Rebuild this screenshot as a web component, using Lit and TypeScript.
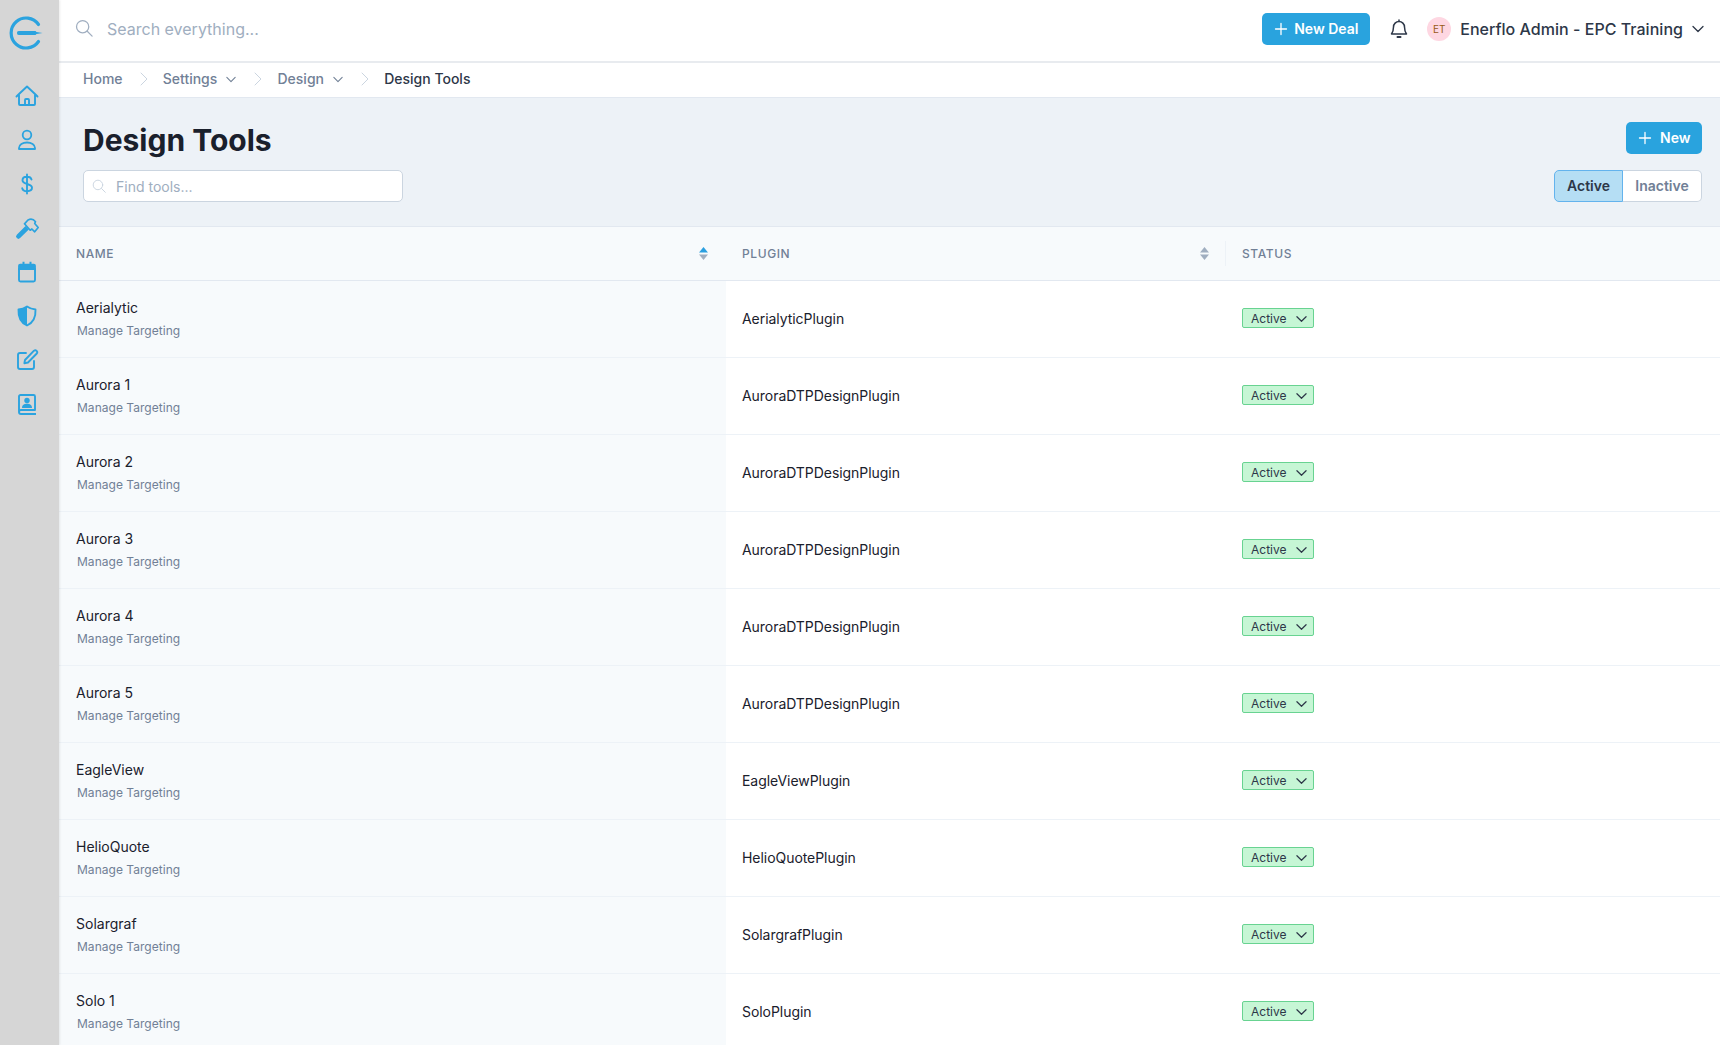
import { LitElement, html, css, svg } from "lit";
import { customElement, state } from "lit/decorators.js";

const chevronDown = html`<svg class="chev" viewBox="0 0 12 8" fill="none" stroke="currentColor" stroke-width="1.3" stroke-linecap="round" stroke-linejoin="round"><path d="M1 1.5l5 5 5-5" /></svg>`;
const plus = html`<svg class="plus" viewBox="0 0 14 14" fill="none" stroke="currentColor" stroke-width="1.3" stroke-linecap="round"><path d="M7 1.5v11M1.5 7h11" /></svg>`;
const sep = html`<svg class="sep" viewBox="0 0 8 14" fill="none" stroke="#cbd5e0" stroke-width="1" stroke-linecap="round" stroke-linejoin="round"><path d="M1 1l6 6-6 6" /></svg>`;
const search = html`<svg viewBox="0 0 20 20" fill="none" stroke="currentColor" stroke-width="1.4" stroke-linecap="round"><circle cx="8.5" cy="8.5" r="6.8" /><path d="M13.6 13.6l5.4 5.4" /></svg>`;

const navIcons = [
  svg`<path fill="none" stroke-width="1.9" stroke-linecap="round" stroke-linejoin="round" d="M1.500 12.500l2.500-2.500m0 0l8-7.500 8 7.500M4 10V20a1 1 0 001 1h4m11-11l2.500 2.500M20 10V20a1 1 0 01-1 1h-4m-6 0a1 1 0 001-1v-4a1 1 0 011-1h2a1 1 0 011 1v4a1 1 0 001 1m-6 0h6" />`,
  svg`<g fill="none" stroke-width="1.800" stroke-linejoin="round"><circle cx="12" cy="7" r="4.300" /><path d="M4 21v-1c0-3.300 3.600-5.500 8-5.500s8 2.200 8 5.500v1z" /></g>`,
  svg`<path fill="none" stroke-width="1.900" stroke-linecap="round" stroke-linejoin="round" d="M16.500 7.500C16 5.500 14.300 4.800 12 4.800c-2.800 0-4.500 1.300-4.500 3.400 0 4.800 9.500 2.800 9.500 7.600 0 2.100-2 3.400-5 3.400-2.500 0-4.300-1-4.800-3M12 2.500v19" />`,
  svg`<path stroke="none" d="M1.800 18.800l8.700-8.700 3.300 3.300-8.700 8.700a2.300 2.300 0 01-3.300-3.300z" /><path fill="none" stroke-width="1.700" stroke-linejoin="round" d="M9.500 7.800L13 4c2.700-1.300 5.500-.8 7.500 1.700l-.8 1.800 3.500 4-3.500 4.300-2.800-2.800-1.700 1.200-5.700-6.400z" />`,
  svg`<path fill="none" stroke-width="1.900" stroke-linejoin="round" d="M4 9h16V20a1.500 1.500 0 01-1.500 1.500H5.500A1.500 1.500 0 014 20z" /><path stroke="none" d="M3.100 10V5.800a2 2 0 012-2H7.500V1.800h2v2h5V1.800h2v2h2.400a2 2 0 012 2V10z" />`,
  svg`<path fill="none" stroke-width="1.900" stroke-linejoin="round" d="M12 2.500c2.600 1.800 5.600 2.800 8.500 3 .4 7.500-2 13-8.500 16-6.500-3-8.900-8.500-8.500-16 2.900-.2 5.900-1.200 8.500-3z" /><path stroke="none" d="M12 2.500c-2.600 1.800-5.600 2.800-8.500 3-.4 7.500 2 13 8.500 16z" />`,
  svg`<path fill="none" stroke-width="1.900" stroke-linecap="round" stroke-linejoin="round" d="M11 5H5a2 2 0 00-2 2v12a2 2 0 002 2h12a2 2 0 002-2v-6M10 12l9-9.300a2 2 0 012.800 2.800L13 14.500l-3.600.7z" />`,
  svg`<path fill="none" stroke-width="1.900" stroke-linejoin="round" d="M4 20V4.500A1.500 1.500 0 015.500 3h13A1.500 1.500 0 0120 4.500V18H6a2 2 0 00-2 2 2 2 0 002 2h15" /><circle stroke="none" cx="12" cy="8.500" r="2.700" /><path stroke="none" d="M7 16c0-3 2.200-4.300 5-4.300s5 1.300 5 4.300z" />`,
];

const rows = [
  ["Aerialytic", "AerialyticPlugin"],
  ["Aurora 1", "AuroraDTPDesignPlugin"],
  ["Aurora 2", "AuroraDTPDesignPlugin"],
  ["Aurora 3", "AuroraDTPDesignPlugin"],
  ["Aurora 4", "AuroraDTPDesignPlugin"],
  ["Aurora 5", "AuroraDTPDesignPlugin"],
  ["EagleView", "EagleViewPlugin"],
  ["HelioQuote", "HelioQuotePlugin"],
  ["Solargraf", "SolargrafPlugin"],
  ["Solo 1", "SoloPlugin"],
];

@customElement("app-root")
export class AppRoot extends LitElement {
  static styles = css`
    :host {
      display: flex;
      height: 100vh;
      overflow: hidden;
      font-family: Inter, "Liberation Sans", sans-serif;
      color: #1a202c;
      background: #fff;
    }
    svg {
      display: block;
    }
    .side {
      width: 59px;
      flex: none;
      background: #d6d6d6;
      box-shadow: 1px 0 2px rgba(0, 0, 0, 0.08);
      z-index: 1;
      display: flex;
      flex-direction: column;
    }
    .logo {
      width: 36px;
      height: 36px;
      margin: 15px 0 0 9px;
    }
    .nav {
      margin-top: 33px;
      display: flex;
      flex-direction: column;
      gap: 20px;
      padding-left: 15px;
    }
    .nav svg {
      width: 24px;
      height: 24px;
      stroke: #2ba3df;
      fill: #2ba3df;
    }
    .main {
      flex: 1;
      min-width: 0;
      display: flex;
      flex-direction: column;
    }
    .top {
      flex: none;
      box-sizing: border-box;
      border-bottom: 2px solid #e8ebef;
      height: 63px;
      display: flex;
      align-items: center;
      padding: 0 16px 3px 16px;
    }
    .top-search {
      width: 18px;
      height: 18px;
      color: #a0aec0;
      margin-right: 14px;
      margin-bottom: 2px;
    }
    .top-text {
      font-size: 16px;
      color: #a0aec0;
      flex: 1;
    }
    .btn {
      display: inline-flex;
      align-items: center;
      height: 32px;
      box-sizing: border-box;
      border-radius: 5px;
      background: #29a3de;
      color: #fff;
      font-size: 14px;
      font-weight: 600;
      padding-bottom: 1px;
    }
    .plus {
      width: 14px;
      height: 14px;
    }
    .deal {
      width: 108px;
      padding-left: 12px;
      gap: 6px;
    }
    .bell {
      width: 20px;
      height: 20px;
      margin: 0 18px 0 19px;
      color: #2d3748;
    }
    .avatar {
      width: 24px;
      height: 24px;
      border-radius: 50%;
      background: #fed7e2;
      color: #975a16;
      font-size: 10px;
      display: flex;
      align-items: center;
      justify-content: center;
      margin-right: 9px;
    }
    .who {
      font-size: 16px;
      font-weight: 500;
      letter-spacing: 0.03px;
      color: #2d3748;
    }
    .who-chev {
      width: 12px;
      height: 8px;
      margin-left: 9px;
      color: #2d3748;
    }
    .crumbs {
      height: 35px;
      flex: none;
      box-sizing: border-box;
      border-bottom: 1px solid #e2e8f0;
      display: flex;
      align-items: center;
      padding: 0 0 3px 24px;
      font-size: 14px;
      font-weight: 500;
      color: #718096;
    }
    .crumbs .chev {
      width: 10px;
      height: 7px;
      margin: 2px 1px 0 9px;
    }
    .sep {
      width: 8px;
      height: 14px;
      margin: 0 15.2px 0 17px;
    }
    .crumbs .current {
      color: #2d3748;
    }
    .head {
      height: 129px;
      flex: none;
      box-sizing: border-box;
      background: #edf2f7;
      border-bottom: 1px solid #e2e8f0;
      padding: 24px 18px 0 24px;
      display: grid;
      grid-template-columns: 1fr auto;
      grid-template-rows: 32px 32px;
      row-gap: 16px;
      align-items: center;
    }
    h1 {
      margin: 4px 0 0;
      font-size: 30px;
      line-height: 36px;
      font-weight: 700;
      color: #1a202c;
    }
    .new {
      justify-self: end;
      width: 76px;
      padding-left: 12px;
      gap: 8px;
    }
    .find {
      width: 320px;
      height: 32px;
      box-sizing: border-box;
      background: #fff;
      border: 1px solid #cbd5e0;
      border-radius: 5px;
      display: flex;
      align-items: center;
      gap: 10px;
      padding-left: 8px;
      font-size: 14px;
      color: #a0aec0;
    }
    .find svg {
      width: 14px;
      height: 14px;
      color: #cbd5e0;
    }
    .toggle {
      display: flex;
      height: 32px;
      box-sizing: border-box;
      font-size: 14px;
      font-weight: 600;
    }
    .toggle div {
      display: flex;
      align-items: center;
      justify-content: center;
      box-sizing: border-box;
      padding-bottom: 1px;
    }
    .on {
      width: 69px;
      background: #b5def4;
      color: #2d3748;
      border: 1px solid #63b3ed;
      border-radius: 5px 0 0 5px;
    }
    .off {
      width: 79px;
      background: #fff;
      color: #718096;
      border: 1px solid #cbd5e0;
      border-left: none;
      border-radius: 0 5px 5px 0;
    }
    .table {
      display: grid;
      grid-template-columns: 667px 499px 1fr;
      grid-template-rows: 54px;
      grid-auto-rows: 77px;
      font-size: 14px;
    }
    .th {
      box-sizing: border-box;
      background: #f7fafc;
      border-bottom: 1px solid #e2e8f0;
      display: flex;
      align-items: center;
      font-size: 12px;
      font-weight: 500;
      letter-spacing: 0.05em;
      color: #718096;
      padding: 0 16px;
      position: relative;
    }
    .th.first {
      padding: 0 18px 0 17px;
    }
    .th span {
      flex: 1;
    }
    .sort {
      width: 9px;
      height: 13px;
      flex: none;
    }
    .status-head {
      padding-left: 17px;
    }
    .status-head::before {
      content: "";
      position: absolute;
      left: 0;
      top: 14px;
      bottom: 14px;
      width: 1px;
      background: #edf2f7;
    }
    .cell {
      height: 77px;
      box-sizing: border-box;
      border-bottom: 1px solid #edf2f7;
      display: flex;
      align-items: center;
      padding: 0 16px;
      color: #1a202c;
    }
    .name {
      background: #f7fafc;
      flex-direction: column;
      align-items: flex-start;
      justify-content: center;
      padding: 0 16px 2px 17px;
      gap: 7px;
    }
    .plugin {
      letter-spacing: -0.05px;
      padding-bottom: 1px;
    }
    .status {
      padding-left: 17px;
    }
    .sub {
      font-size: 12px;
      letter-spacing: 0.03px;
      color: #718096;
      margin-left: 1px;
    }
    .badge {
      width: 72px;
      height: 20px;
      box-sizing: border-box;
      background: #c6f6d5;
      border: 1px solid #68d391;
      border-radius: 2px;
      display: flex;
      align-items: center;
      justify-content: space-between;
      padding: 0 6px 0 8px;
      font-size: 12px;
      color: #2d3748;
      margin-top: -2px;
    }
    .badge .chev {
      width: 11px;
      height: 8px;
      margin-top: 1px;
    }
  `;

  @state() rows = rows;

  render() {
    return html`
      <aside class="side">
        <svg class="logo" viewBox="0 0 36 36">
          <path d="M29.500 9.500A15 15 0 1 0 29.500 26.500" fill="none" stroke="#2ba3df" stroke-width="3.200" stroke-linecap="round" />
          <path d="M8 18a1.800 1.800 0 0 1 1.800-2H26.500l1 1 6 1-6 1-1 1H9.800A1.800 1.800 0 0 1 8 18z" fill="#2ba3df" />
        </svg>
        <nav class="nav">${navIcons.map((i) => html`<svg viewBox="0 0 24 24">${i}</svg>`)}</nav>
      </aside>
      <div class="main">
        <header class="top">
          <div class="top-search">${search}</div>
          <div class="top-text">Search everything...</div>
          <div class="btn deal">${plus}New Deal</div>
          <svg class="bell" viewBox="0 0 20 20" fill="none" stroke="currentColor" stroke-width="1.500" stroke-linecap="round" stroke-linejoin="round">
            <path d="M10 2.500a5.500 5.500 0 0 0-5.500 5.500c0 4-1 5.500-2 7h15c-1-1.500-2-3-2-7A5.500 5.500 0 0 0 10 2.500zM10 1v1.500" />
            <path d="M8.500 18h3" stroke-width="2" />
          </svg>
          <div class="avatar">ET</div>
          <div class="who">Enerflo Admin - EPC Training</div>
          <svg class="who-chev" viewBox="0 0 12 8" fill="none" stroke="currentColor" stroke-width="1.300" stroke-linecap="round" stroke-linejoin="round"><path d="M1 1.500l5 5 5-5" /></svg>
        </header>
        <div class="crumbs">
          <span>Home</span>${sep}
          <span>Settings</span>${chevronDown}${sep}
          <span>Design</span>${chevronDown}${sep}
          <span class="current">Design Tools</span>
        </div>
        <section class="head">
          <h1>Design Tools</h1>
          <div class="btn new">${plus}New</div>
          <div class="find">${search}<span>Find tools...</span></div>
          <div class="toggle"><div class="on">Active</div><div class="off">Inactive</div></div>
        </section>
        <div class="table">
          <div class="th first"><span>NAME</span>${this.sortIcon(true)}</div>
          <div class="th"><span>PLUGIN</span>${this.sortIcon(false)}</div>
          <div class="th status-head"><span>STATUS</span></div>
          ${this.rows.map(
            ([name, plugin]) => html`
              <div class="cell name"><div>${name}</div><div class="sub">Manage Targeting</div></div>
              <div class="cell plugin">${plugin}</div>
              <div class="cell status"><div class="badge">Active ${chevronDown}</div></div>
            `
          )}
        </div>
      </div>
    `;
  }

  sortIcon(active: boolean) {
    return html`<svg class="sort" viewBox="0 0 9 13">
      <path d="M4.500 0L9 5.500H0z" fill=${active ? "#2b9fe0" : "#a0aec0"} />
      <path d="M4.500 13L9 7.500H0z" fill="#a0aec0" />
    </svg>`;
  }
}
